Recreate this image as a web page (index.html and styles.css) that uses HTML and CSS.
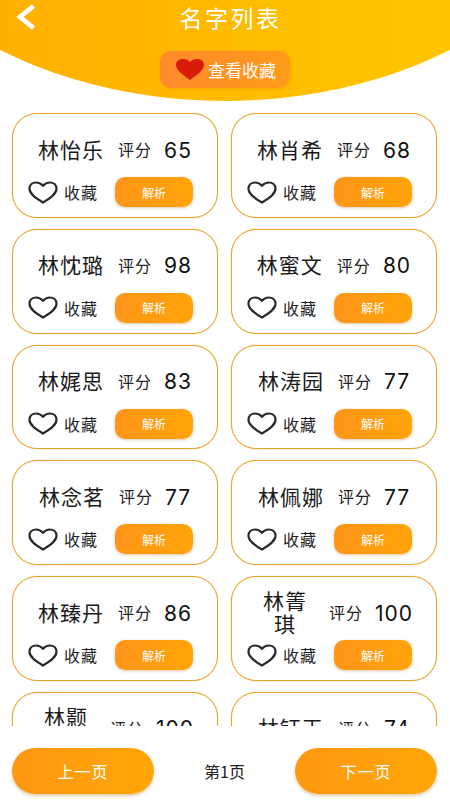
FILE: index.html
```html
<!DOCTYPE html>
<html lang="zh-CN">
<head>
    <meta charset="UTF-8">
    <meta name="viewport" content="width=device-width, initial-scale=1.0">
    <title>名字列表</title>
    <link rel="stylesheet" href="styles.css">
</head>
<body>
    <svg class="defs" width="0" height="0">
        <symbol id="heart" viewBox="0 0 30 23"><path d="M15 21.500C9 18 1.500 13.500 1.500 7.800 1.500 3.800 4.500 1.500 8.200 1.500c2.800 0 5 1.200 6.800 3.200 1.800-2 4-3.200 6.800-3.200 3.700 0 6.700 2.300 6.700 6.300 0 5.700-7.500 10.200-13.500 13.700z" fill="none" stroke="#2a2a2a" stroke-width="2.200"/></symbol>
    </svg>
    <div class="page">
        <div class="header">
            <div class="title-bar">
                <svg class="back" viewBox="0 0 20 26"><path d="M17.500 2L4 13l13.500 11" fill="none" stroke="#fff" stroke-width="4.800"/></svg>
                <span class="title">名字列表</span>
            </div>
            <div class="fav-link">
                <svg class="fav-heart" viewBox="0 0 28 21"><path d="M14 21C9 17 0 12 0 6 0 2 3 0 7 0c3 0 5 1 7 3 2-2 4-3 7-3 4 0 7 2 7 6 0 6-9 11-14 15z" fill="#d91c05"/></svg>
                <span>查看收藏</span>
            </div>
        </div>

        <div class="list">
            <div class="card">
                <div class="info"><span class="name">林怡乐</span><span class="label">评分</span><span class="score">65</span></div>
                <div class="actions"><svg class="heart"><use href="#heart"/></svg><span class="fav-text">收藏</span><span class="btn-parse">解析</span></div>
            </div>
            <div class="card">
                <div class="info"><span class="name">林肖希</span><span class="label">评分</span><span class="score">68</span></div>
                <div class="actions"><svg class="heart"><use href="#heart"/></svg><span class="fav-text">收藏</span><span class="btn-parse">解析</span></div>
            </div>
            <div class="card">
                <div class="info"><span class="name">林忱璐</span><span class="label">评分</span><span class="score">98</span></div>
                <div class="actions"><svg class="heart"><use href="#heart"/></svg><span class="fav-text">收藏</span><span class="btn-parse">解析</span></div>
            </div>
            <div class="card">
                <div class="info"><span class="name">林蜜文</span><span class="label">评分</span><span class="score">80</span></div>
                <div class="actions"><svg class="heart"><use href="#heart"/></svg><span class="fav-text">收藏</span><span class="btn-parse">解析</span></div>
            </div>
            <div class="card">
                <div class="info"><span class="name">林娓思</span><span class="label">评分</span><span class="score">83</span></div>
                <div class="actions"><svg class="heart"><use href="#heart"/></svg><span class="fav-text">收藏</span><span class="btn-parse">解析</span></div>
            </div>
            <div class="card">
                <div class="info"><span class="name">林涛园</span><span class="label">评分</span><span class="score">77</span></div>
                <div class="actions"><svg class="heart"><use href="#heart"/></svg><span class="fav-text">收藏</span><span class="btn-parse">解析</span></div>
            </div>
            <div class="card">
                <div class="info"><span class="name">林念茗</span><span class="label">评分</span><span class="score">77</span></div>
                <div class="actions"><svg class="heart"><use href="#heart"/></svg><span class="fav-text">收藏</span><span class="btn-parse">解析</span></div>
            </div>
            <div class="card">
                <div class="info"><span class="name">林佩娜</span><span class="label">评分</span><span class="score">77</span></div>
                <div class="actions"><svg class="heart"><use href="#heart"/></svg><span class="fav-text">收藏</span><span class="btn-parse">解析</span></div>
            </div>
            <div class="card">
                <div class="info"><span class="name">林臻丹</span><span class="label">评分</span><span class="score">86</span></div>
                <div class="actions"><svg class="heart"><use href="#heart"/></svg><span class="fav-text">收藏</span><span class="btn-parse">解析</span></div>
            </div>
            <div class="card">
                <div class="info"><span class="name name-wrap">林箐 琪</span><span class="label">评分</span><span class="score">100</span></div>
                <div class="actions"><svg class="heart"><use href="#heart"/></svg><span class="fav-text">收藏</span><span class="btn-parse">解析</span></div>
            </div>
            <div class="card">
                <div class="info"><span class="name name-wrap">林颢 晨</span><span class="label">评分</span><span class="score">100</span></div>
            </div>
            <div class="card">
                <div class="info"><span class="name">林钰玉</span><span class="label">评分</span><span class="score">74</span></div>
            </div>
        </div>

        <div class="footer">
            <span class="btn-page">上一页</span>
            <span class="page-no">第1页</span>
            <span class="btn-page">下一页</span>
        </div>
    </div>
</body>
</html>
```

FILE: styles.css
```css
* {
    box-sizing: border-box;
}
body {
    margin: 0;
    background-color: #fff;
    font-family: "Noto Sans CJK SC", "Noto Sans", sans-serif;
    color: #222;
}
.defs {
    display: block;
    height: 0;
}
.page {
    display: flex;
    flex-direction: column;
    width: 450px;
    height: 800px;
    overflow: hidden;
}

/* header with the curved bottom */
.header {
    position: relative;
    flex: none;
    height: 113px;
    overflow: hidden;
}
.header::before {
    content: "";
    position: absolute;
    left: -175px;
    bottom: 12px;
    width: 800px;
    height: 590px;
    border-radius: 50%;
    background: linear-gradient(90deg, #ffb000 20%, #ffc600 80%);
}
.title-bar {
    position: relative;
    display: flex;
    justify-content: center;
    align-items: center;
    height: 34px;
}
.back {
    position: absolute;
    left: 16px;
    top: 4px;
    width: 20px;
    height: 26px;
}
.title {
    margin-left: 11px;
    color: #fff;
    font-size: 23px;
    letter-spacing: 2.500px;
}
.fav-link {
    position: relative;
    display: flex;
    align-items: center;
    width: 130px;
    height: 37px;
    margin: 17px auto 0;
    padding-left: 16px;
    border-radius: 11px;
    background: linear-gradient(100deg, #ff8a2c, #ff9c18);
    color: #fff;
    font-size: 17px;
    line-height: 35px;
    box-shadow: 0 1px 3px rgba(230, 120, 0, .35);
}
.fav-heart {
    flex: none;
    width: 28px;
    height: 21px;
    margin-right: 4px;
}

/* name cards */
.list {
    flex: 1;
    display: grid;
    grid-template-columns: 206px 206px;
    grid-auto-rows: 104.800px;
    gap: 11px 13px;
    padding: 0 12px;
    overflow: hidden;
}
.card {
    border: 1px solid #e8a42a;
    border-radius: 25px;
    background-color: #fff;
    box-shadow: 0 0 1px rgba(232, 164, 42, .8);
}
.info {
    display: flex;
    justify-content: center;
    align-items: center;
    height: 58px;
    margin-top: 6px;
}
.name {
    font-size: 21px;
    line-height: 23px;
    letter-spacing: 1px;
    text-align: center;
    color: #1a1a1a;
}
.name-wrap {
    width: 60px;
}
.label {
    margin-left: 14px;
    font-size: 16px;
    letter-spacing: 1px;
    color: #222;
}
.score {
    margin-left: 12px;
    padding-top: 2px;
    font-family: Inter, sans-serif;
    font-size: 21px;
    letter-spacing: 1px;
    color: #111;
}
.actions {
    display: flex;
    align-items: center;
    height: 30px;
    margin-top: -1px;
    padding-left: 15px;
}
.heart {
    flex: none;
    width: 30px;
    height: 23px;
}
.fav-text {
    margin-left: 6px;
    font-size: 16px;
    line-height: 28px;
    letter-spacing: 1px;
    color: #222;
}
.btn-parse {
    display: flex;
    justify-content: center;
    align-items: center;
    width: 78px;
    height: 30px;
    margin-left: auto;
    margin-right: 24px;
    border-radius: 10px;
    background: linear-gradient(90deg, #ff951a, #ffa408);
    color: #fff;
    font-size: 12px;
    box-shadow: 0 1px 3px rgba(150, 90, 0, .35);
}

/* paging */
.footer {
    flex: none;
    display: flex;
    justify-content: space-between;
    align-items: center;
    height: 74px;
    padding: 22px 13px 6px 12px;
    background-color: #fff;
}
.btn-page {
    display: flex;
    justify-content: center;
    align-items: center;
    width: 142px;
    height: 46px;
    border-radius: 23px;
    background: linear-gradient(90deg, #ff9812, #ffa606);
    color: #fff;
    font-size: 16px;
    letter-spacing: 1px;
    line-height: 44px;
    box-shadow: 0 2px 3px rgba(150, 90, 0, .3);
}
.page-no {
    font-size: 16px;
    line-height: 44px;
    color: #222;
}
```
